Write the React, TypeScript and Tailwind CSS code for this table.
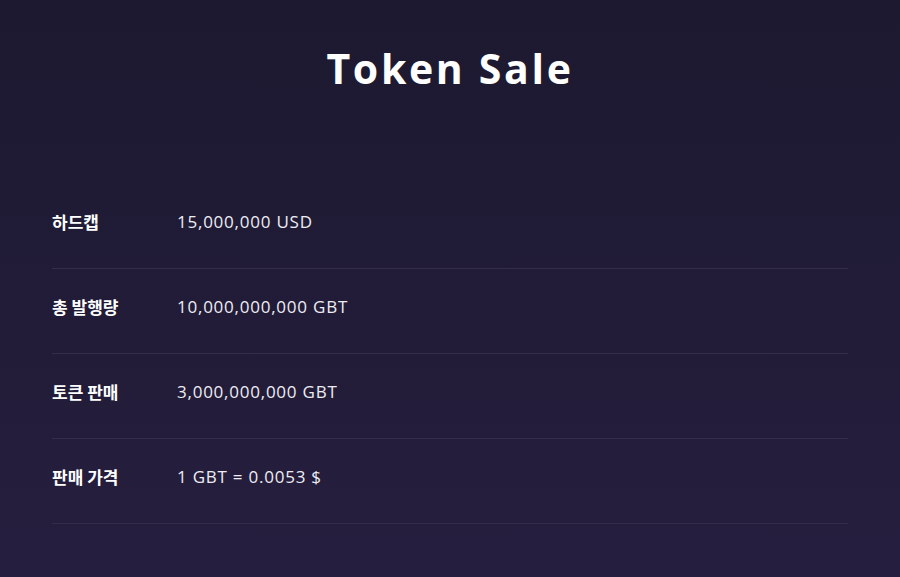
const rows = [
  { label: "하드캡", value: "15,000,000 USD" },
  { label: "총 발행량", value: "10,000,000,000 GBT" },
  { label: "토큰 판매", value: "3,000,000,000 GBT" },
  { label: "판매 가격", value: "1 GBT = 0.0053 $" },
];

export default function App() {
  return (
    <div className="min-h-[577px] w-full bg-gradient-to-b from-[#1c1930] to-[#261e3e] text-white">
      <h1 className="pt-[45px] text-center font-['Open_Sans','Noto_Sans_CJK_KR',sans-serif] text-[41px] font-bold leading-[46px] tracking-[0.065em]">
        Token Sale
      </h1>

      <div className="mx-[52px] mt-[93px]">
        {rows.map((row) => (
          <div
            key={row.label}
            className="flex items-center border-b border-[#342d4a] pt-[26px] pb-[34px]"
          >
            <div className="w-[125px] font-['Noto_Sans_CJK_KR',sans-serif] text-[17px] font-bold leading-6">
              {row.label}
            </div>
            <div className="font-['Open_Sans','Noto_Sans_CJK_KR',sans-serif] text-[17px] font-normal leading-6 tracking-[0.045em] text-[#eeedf3]">
              {row.value}
            </div>
          </div>
        ))}
      </div>
    </div>
  );
}
